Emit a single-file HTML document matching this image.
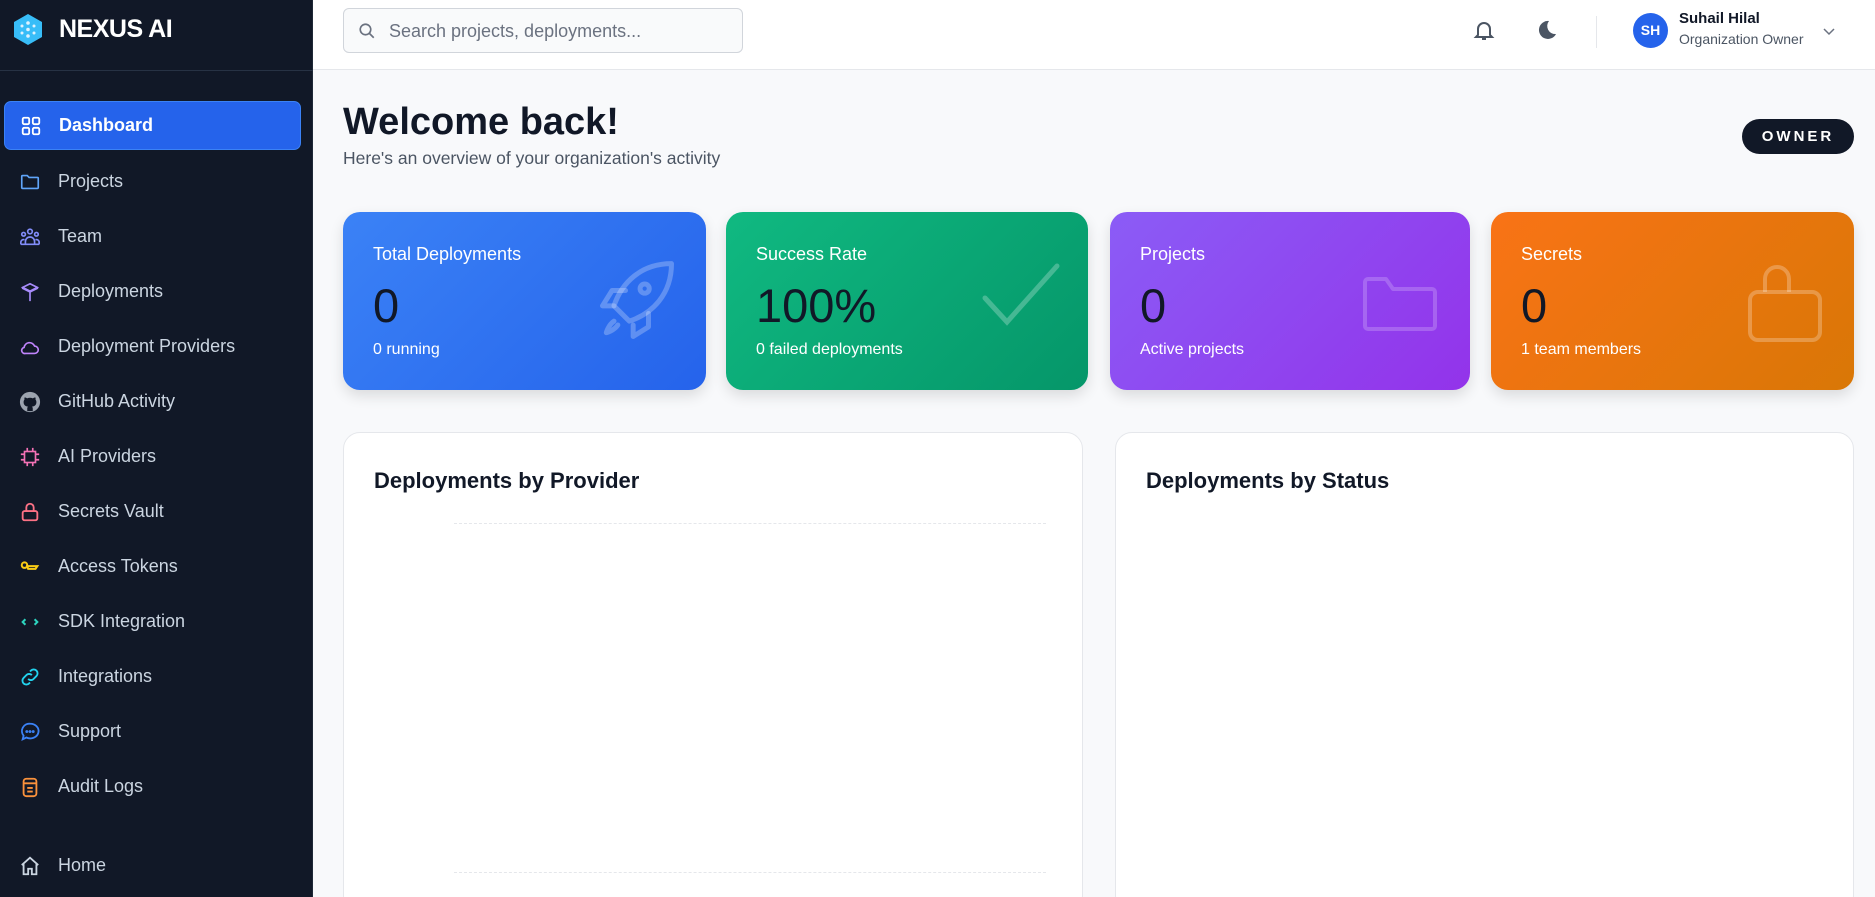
<!DOCTYPE html><html><head><meta charset="utf-8"><style>
*{box-sizing:border-box;margin:0;padding:0}
html{width:1875px;height:897px;overflow:hidden}
body{width:1875px;height:897px;overflow:hidden;background:#f8f9fb;font-family:"Liberation Sans",sans-serif;position:relative}
.sb{position:absolute;left:0;top:0;width:313px;height:897px;background:#111827;border-right:1px solid #1f2937}
.logo{position:absolute;left:14px;top:14px;display:flex;align-items:center}
.logo span{color:#fff;font-weight:bold;font-size:25px;margin-left:17px;letter-spacing:-0.5px}
.hr{position:absolute;left:0;top:70px;width:313px;border-top:1px solid #273244}
.nav{position:absolute;left:4px;width:297px;height:49px;display:flex;align-items:center;color:#cbd5e1;font-size:18px;border-radius:7px}
.nav svg{position:absolute;left:15px;width:22px;height:22px}
.nav span{position:absolute;left:54px}
.nav.act{background:#2563eb;color:#fff;font-weight:bold;border:1px solid #3b82f6}
.top{position:absolute;left:313px;top:0;right:0;height:70px;background:#fff;border-bottom:1px solid #e5e7eb}
.search{position:absolute;left:343px;top:8px;width:400px;height:45px;border:1px solid #d1d5db;border-radius:6px;background:#f9fafb}
.search span{position:absolute;left:45px;top:12px;color:#6b7280;font-size:18px}
.card{position:absolute;top:212px;height:178px;border-radius:17px;color:#fff;box-shadow:0 6px 14px rgba(0,0,0,.12)}
.card .l{position:absolute;left:30px;top:32px;font-size:18px}
.card .n{position:absolute;left:30px;top:66px;font-size:47px;color:#111827}
.card .s{position:absolute;left:30px;top:129px;font-size:16px}
.card svg{position:absolute}
.panel{position:absolute;top:432px;height:480px;background:#fff;border:1px solid #e5e7eb;border-radius:17px}
.panel h3{position:absolute;left:30px;top:35px;font-size:22px;color:#111827}
.dash{position:absolute;left:110px;width:592px;border-top:1px dashed #e5e7eb}
.clip{position:absolute;left:0;top:0;width:1875px;height:897px;overflow:hidden}
</style></head><body><div class="clip">
<div class="sb">
<div class="logo"><svg width="28" height="31" viewBox="0 0 28 31"><polygon points="14,0 28,8 28,23 14,31 0,23 0,8" fill="#38bdf8"/><g fill="#e0f2fe"><circle cx="14" cy="9" r="1.8"/><circle cx="14" cy="15.5" r="1.8"/><circle cx="14" cy="22" r="1.8"/><circle cx="8" cy="12" r="1.5"/><circle cx="20" cy="12" r="1.5"/><circle cx="8" cy="19" r="1.5"/><circle cx="20" cy="19" r="1.5"/></g></svg><span>NEXUS AI</span></div>
<div class="hr"></div>
<div class="nav act" style="top:101px"><svg viewBox="0 0 24 24" fill="none" stroke="#fff" stroke-width="2"><rect x="3" y="3" width="7" height="7" rx="1.5"/><rect x="14" y="3" width="7" height="7" rx="1.5"/><rect x="3" y="14" width="7" height="7" rx="1.5"/><rect x="14" y="14" width="7" height="7" rx="1.5"/></svg><span>Dashboard</span></div>
<div class="nav" style="top:157px"><svg viewBox="0 0 24 24" fill="none" stroke="#60a5fa" stroke-width="1.8"><path d="M3 6a1 1 0 0 1 1-1h5l2 2h9a1 1 0 0 1 1 1v10a1 1 0 0 1-1 1H4a1 1 0 0 1-1-1z"/></svg><span>Projects</span></div>
<div class="nav" style="top:212px"><svg viewBox="0 0 24 24" fill="none" stroke="#818cf8" stroke-width="1.8"><circle cx="12" cy="6" r="2.5"/><circle cx="5" cy="9" r="2"/><circle cx="19" cy="9" r="2"/><path d="M7 20v-3a5 5 0 0 1 10 0v3zM2 20v-2a3 3 0 0 1 4-3M22 20v-2a3 3 0 0 0-4-3M2 20h20"/></svg><span>Team</span></div>
<div class="nav" style="top:267px"><svg viewBox="0 0 24 24" fill="none" stroke="#a78bfa" stroke-width="1.8"><path d="M12 3l8 4-8 4-8-4zM4 7v1l8 4 8-4V7M12 12v10"/></svg><span>Deployments</span></div>
<div class="nav" style="top:322px"><svg viewBox="0 0 24 24" fill="none" stroke="#c084fc" stroke-width="1.8"><path d="M7 19h10a4 4 0 0 0 0-8 6 6 0 0 0-11.5 1.5A3.3 3.3 0 0 0 7 19z"/></svg><span>Deployment Providers</span></div>
<div class="nav" style="top:377px"><svg viewBox="0 0 24 24"><circle cx="12" cy="12" r="11" fill="#9ca3af"/><path d="M9 22v-3c0-1 .5-1.7 1-2-3-.3-5-1.5-5-5 0-1 .4-2 1-2.6-.2-.6-.2-1.6.2-2.4 1 0 2 .6 2.6 1a8 8 0 0 1 6.4 0c.6-.4 1.6-1 2.6-1 .4.8.4 1.8.2 2.4.6.6 1 1.6 1 2.6 0 3.5-2 4.7-5 5 .5.3 1 1 1 2v3z" fill="#111827"/></svg><span>GitHub Activity</span></div>
<div class="nav" style="top:432px"><svg viewBox="0 0 24 24" fill="none" stroke="#f472b6" stroke-width="1.8"><rect x="6" y="6" width="12" height="12"/><path d="M9 2v4M15 2v4M9 18v4M15 18v4M2 9h4M2 15h4M18 9h4M18 15h4"/></svg><span>AI Providers</span></div>
<div class="nav" style="top:487px"><svg viewBox="0 0 24 24" fill="none" stroke="#fb7185" stroke-width="2"><rect x="4" y="11" width="16" height="10" rx="2"/><path d="M8 11V7a4 4 0 0 1 8 0v4"/></svg><span>Secrets Vault</span></div>
<div class="nav" style="top:542px"><svg viewBox="0 0 24 24" fill="none" stroke="#facc15" stroke-width="2.2"><circle cx="6" cy="10" r="3"/><path d="M9 11h11l-2 3h-8z"/></svg><span>Access Tokens</span></div>
<div class="nav" style="top:597px"><svg viewBox="0 0 24 24" fill="none" stroke="#2dd4bf" stroke-width="2.2"><path d="M7 9l-3 3 3 3M17 9l3 3-3 3"/></svg><span>SDK Integration</span></div>
<div class="nav" style="top:652px"><svg viewBox="0 0 24 24" fill="none" stroke="#22d3ee" stroke-width="2"><path d="M10 14a4 4 0 0 0 6 0l3-3a4 4 0 0 0-6-6l-1 1M14 10a4 4 0 0 0-6 0l-3 3a4 4 0 0 0 6 6l1-1"/></svg><span>Integrations</span></div>
<div class="nav" style="top:707px"><svg viewBox="0 0 24 24" fill="none" stroke="#3b82f6" stroke-width="2"><path d="M12 3a9 8 0 1 1-4 15l-4 2 1-4A8 8 0 0 1 12 3z"/><circle cx="8.5" cy="11.5" r=".6" fill="#3b82f6"/><circle cx="12" cy="11.5" r=".6" fill="#3b82f6"/><circle cx="15.5" cy="11.5" r=".6" fill="#3b82f6"/></svg><span>Support</span></div>
<div class="nav" style="top:762px"><svg viewBox="0 0 24 24" fill="none" stroke="#fb923c" stroke-width="2"><rect x="5" y="3" width="14" height="19" rx="3"/><path d="M5 8h14M9 13h6M9 17h6"/></svg><span>Audit Logs</span></div>
<div class="nav" style="top:841px"><svg viewBox="0 0 24 24" fill="none" stroke="#cbd5e1" stroke-width="2"><path d="M3 11l9-8 9 8M5 10v11h5v-6h4v6h5V10"/></svg><span>Home</span></div>
</div>
<div class="top"></div>
<div class="search"><svg style="position:absolute;left:14px;top:13px" width="18" height="18" viewBox="0 0 24 24" fill="none" stroke="#6b7280" stroke-width="2.2"><circle cx="10" cy="10" r="7"/><path d="M15 15l6 6"/></svg><span>Search projects, deployments...</span></div>
<svg style="position:absolute;left:1472px;top:18px" width="24" height="24" viewBox="0 0 24 24" fill="none" stroke="#4b5563" stroke-width="2"><path d="M6 17V11a6 6 0 0 1 12 0v6l2 2H4zM10 21h4"/></svg>
<svg style="position:absolute;left:1535px;top:18px" width="24" height="24" viewBox="0 0 24 24"><path d="M14 3a9 9 0 1 0 7 13A8 8 0 0 1 14 3z" fill="#4b5563"/></svg>
<div style="position:absolute;left:1596px;top:16px;height:32px;border-left:1px solid #e5e7eb"></div>
<div style="position:absolute;left:1633px;top:13px;width:35px;height:35px;border-radius:50%;background:#2563eb;color:#fff;font-weight:bold;font-size:14px;text-align:center;line-height:35px">SH</div>
<div style="position:absolute;left:1679px;top:10px;font-size:15px;font-weight:bold;color:#111827">Suhail Hilal</div>
<div style="position:absolute;left:1679px;top:31px;font-size:14px;color:#4b5563">Organization Owner</div>
<svg style="position:absolute;left:1822px;top:24px" width="14" height="14" viewBox="0 0 14 14" fill="none" stroke="#6b7280" stroke-width="1.5"><path d="M2 5l5 5 5-5"/></svg>
<div style="position:absolute;left:343px;top:101px;font-size:38px;font-weight:bold;color:#111827">Welcome back!</div>
<div style="position:absolute;left:343px;top:148px;font-size:17.5px;color:#4b5563">Here's an overview of your organization's activity</div>
<div style="position:absolute;left:1742px;top:119px;width:112px;height:35px;border-radius:18px;background:#111827;color:#fff;font-weight:bold;font-size:15px;letter-spacing:3px;text-align:center;line-height:35px">OWNER</div>
<div class="card" style="left:343px;width:363px;background:linear-gradient(135deg,#3b82f6,#2563eb)"><div class="l">Total Deployments</div><div class="n">0</div><div class="s">0 running</div>
<svg style="left:248px;top:44px" width="92" height="92" viewBox="0 0 24 24" fill="none" stroke="rgba(255,255,255,.25)" stroke-width="1.3" stroke-linecap="round" stroke-linejoin="round"><path d="M9 16l-3-3c2-6 7-11 15-11 0 8-5 13-11 15z"/><circle cx="14" cy="8.5" r="1.2"/><path d="M6 13H3l2.5-4H9M11 18v3l4-2.5V15M6 17c-1.5 1-2 3-2 3s2-.5 3-2"/></svg></div>
<div class="card" style="left:726px;width:362px;background:linear-gradient(135deg,#10b981,#059669)"><div class="l">Success Rate</div><div class="n">100%</div><div class="s">0 failed deployments</div>
<svg style="left:255px;top:50px" width="80" height="70" viewBox="0 0 80 70" fill="none" stroke="rgba(255,255,255,.25)" stroke-width="5" stroke-linecap="round"><path d="M4 36l22 24L76 4"/></svg></div>
<div class="card" style="left:1110px;width:360px;background:linear-gradient(135deg,#8b5cf6,#9333ea)"><div class="l">Projects</div><div class="n">0</div><div class="s">Active projects</div>
<svg style="left:252px;top:65px" width="76" height="55" viewBox="0 0 76 55" fill="none" stroke="rgba(255,255,255,.2)" stroke-width="4" stroke-linejoin="round"><path d="M3 5a3 3 0 0 1 3-3h18l7 10h39a3 3 0 0 1 3 3v34a3 3 0 0 1-3 3H6a3 3 0 0 1-3-3z"/></svg></div>
<div class="card" style="left:1491px;width:363px;background:linear-gradient(135deg,#f97316,#d97706)"><div class="l">Secrets</div><div class="n">0</div><div class="s">1 team members</div>
<svg style="left:256px;top:50px" width="76" height="82" viewBox="0 0 76 82" fill="none" stroke="rgba(255,255,255,.25)" stroke-width="4"><rect x="3" y="30" width="70" height="48" rx="8"/><path d="M18 30V17a12 12 0 0 1 24 0v13"/></svg></div>
<div class="panel" style="left:343px;width:740px"><h3>Deployments by Provider</h3><div class="dash" style="top:90px"></div><div class="dash" style="top:439px"></div></div>
<div class="panel" style="left:1115px;width:739px"><h3>Deployments by Status</h3></div>
</div></body></html>
